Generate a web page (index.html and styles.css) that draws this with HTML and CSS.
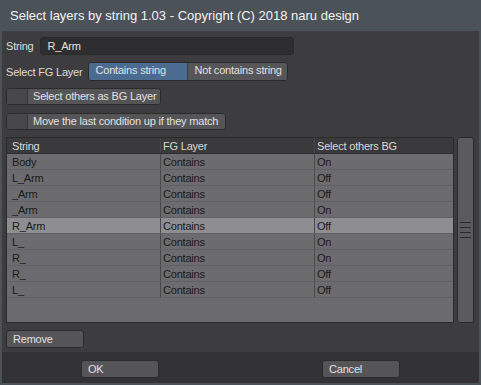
FILE: index.html
```html
<!DOCTYPE html>
<html lang="en">
<head>
    <meta charset="UTF-8">
    <title>Select layers by string</title>
    <link rel="stylesheet" href="styles.css">
</head>
<body>
    <div class="window">
        <div class="title-bar">Select layers by string 1.03 - Copyright (C) 2018 naru design</div>
        <div class="panel">
            <div class="row">
                <span class="label">String</span>
                <div class="text-field">R_Arm</div>
            </div>
            <div class="row row-small">
                <span class="label">Select FG Layer</span>
                <div class="segmented">
                    <span class="seg seg-on">Contains string</span>
                    <span class="seg">Not contains string</span>
                </div>
            </div>
            <div class="check-btn check-1">
                <span class="check-box"></span>
                <span class="check-text">Select others as BG Layer</span>
            </div>
            <div class="check-btn check-2">
                <span class="check-box"></span>
                <span class="check-text">Move the last condition up if they match</span>
            </div>
            <div class="list-area">
                <div class="list-box">
                    <table class="list">
                        <thead>
                            <tr><th>String</th><th>FG Layer</th><th>Select others BG</th></tr>
                        </thead>
                        <tbody>
                            <tr><td>Body</td><td>Contains</td><td>On</td></tr>
                            <tr><td>L_Arm</td><td>Contains</td><td>Off</td></tr>
                            <tr><td>_Arm</td><td>Contains</td><td>Off</td></tr>
                            <tr><td>_Arm</td><td>Contains</td><td>On</td></tr>
                            <tr class="selected"><td>R_Arm</td><td>Contains</td><td>Off</td></tr>
                            <tr><td>L_</td><td>Contains</td><td>On</td></tr>
                            <tr><td>R_</td><td>Contains</td><td>On</td></tr>
                            <tr><td>R_</td><td>Contains</td><td>Off</td></tr>
                            <tr><td>L_</td><td>Contains</td><td>Off</td></tr>
                        </tbody>
                    </table>
                </div>
                <div class="scrollbar">
                    <div class="grip">
                        <span></span><span></span><span></span><span></span>
                    </div>
                </div>
            </div>
            <div class="btn remove-btn">Remove</div>
        </div>
        <div class="footer">
            <div class="btn ok-btn">OK</div>
            <div class="btn cancel-btn">Cancel</div>
        </div>
    </div>
</body>
</html>
```

FILE: styles.css
```css
body {
    margin: 0;
    font-family: "Liberation Sans", Arial, sans-serif;
    font-size: 11px;
    letter-spacing: -0.2px;
    background-color: #4b5258;
}

.window {
    width: 481px;
    height: 385px;
    display: flex;
    flex-direction: column;
}

.title-bar {
    height: 31px;
    line-height: 31px;
    padding-left: 10px;
    color: #f2f2f2;
    font-size: 13px;
    letter-spacing: 0;
    background-color: #4b5258;
}

.panel {
    height: 321px;
    margin: 0 2px;
    padding: 6px 4px 0;
    background-color: #3d3d3f;
    box-sizing: border-box;
}

.row {
    display: flex;
    align-items: center;
    height: 18px;
    margin-bottom: 8px;
    white-space: nowrap;
}

.row-small {
    height: 17px;
}

.label {
    color: #dcdcdc;
    margin-right: 6px;
}

.text-field {
    width: 254px;
    height: 18px;
    line-height: 16px;
    padding-left: 7px;
    background-color: #2e2e30;
    border: 1px solid #2a2a2b;
    border-radius: 3px;
    color: #e0e0e0;
    box-sizing: border-box;
}

.segmented {
    display: flex;
    height: 17px;
    border: 1px solid #2b2b2c;
    border-radius: 3px;
    overflow: hidden;
}

.seg {
    width: 99px;
    line-height: 15px;
    padding-left: 6px;
    color: #e0e0e0;
    background-color: #565659;
    box-sizing: border-box;
}

.seg-on {
    background-color: #4b6b90;
    border-right: 1px solid #2f3f52;
}

.check-btn {
    display: flex;
    height: 17px;
    margin-bottom: 8px;
    background-color: #555558;
    border: 1px solid #2b2b2c;
    border-radius: 3px;
    box-sizing: border-box;
    white-space: nowrap;
}

.check-1 {
    width: 155px;
}

.check-2 {
    width: 220px;
    margin-bottom: 7px;
}

.check-box {
    width: 20px;
    background-color: #48484b;
    border-right: 1px solid #363638;
}

.check-text {
    line-height: 15px;
    padding-left: 5px;
    color: #e0e0e0;
}

.list-area {
    display: flex;
    height: 186px;
    margin-bottom: 7px;
}

.list-box {
    width: 448px;
    background-color: #6c6c6e;
    border: 1px solid #2a2a2b;
    box-sizing: border-box;
}

.list {
    width: 100%;
    border-collapse: collapse;
    font-size: 11px;
}

.list th {
    height: 15px;
    text-align: left;
    font-weight: normal;
    color: #d8d8d8;
    background-color: #3a3a3c;
    border-bottom: 1px solid #2e2e30;
    padding: 0 0 0 5px;
}

.list td {
    height: 15px;
    padding: 0 0 0 5px;
    color: #1a1a1a;
    border-bottom: 1px solid #616163;
}

.list th + th,
.list td + td {
    border-left: 1px solid #48484a;
    padding-left: 2px;
}

.list th:nth-child(1) {
    width: 148px;
}

.list th:nth-child(2) {
    width: 151px;
}

.list tr.selected td {
    background-color: #8e8e90;
}

.scrollbar {
    width: 17px;
    margin-left: 3px;
    background-color: #5b5b5e;
    border: 1px solid #2a2a2b;
    border-radius: 3px;
    box-sizing: border-box;
    display: flex;
    align-items: center;
    justify-content: center;
}

.grip span {
    display: block;
    width: 11px;
    height: 1px;
    margin: 4px 0;
    background-color: #2a2a2b;
}

.btn {
    width: 78px;
    height: 18px;
    line-height: 16px;
    padding-left: 6px;
    color: #e0e0e0;
    background-color: #555558;
    border: 1px solid #2b2b2c;
    border-radius: 3px;
    box-sizing: border-box;
}

.footer {
    height: 31px;
    margin: 0 2px;
    padding-top: 8px;
    background-color: #333335;
    box-sizing: border-box;
    display: flex;
}

.ok-btn {
    margin-left: 79px;
}

.cancel-btn {
    margin-left: 163px;
}
```
